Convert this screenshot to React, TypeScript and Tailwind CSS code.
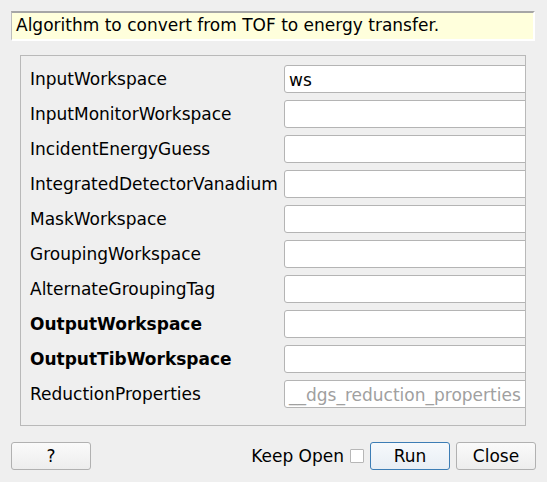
const fields: { name: string; bold?: boolean; value?: string; placeholder?: string }[] = [
  { name: "InputWorkspace", value: "ws" },
  { name: "InputMonitorWorkspace" },
  { name: "IncidentEnergyGuess" },
  { name: "IntegratedDetectorVanadium" },
  { name: "MaskWorkspace" },
  { name: "GroupingWorkspace" },
  { name: "AlternateGroupingTag" },
  { name: "OutputWorkspace", bold: true },
  { name: "OutputTibWorkspace", bold: true },
  { name: "ReductionProperties", placeholder: "__dgs_reduction_properties" },
];

function Field({ name, bold, value, placeholder }: (typeof fields)[number]) {
  return (
    <>
      <div className={`h-[28px] flex items-center pt-[2px] text-[#000] ${bold ? "font-bold" : ""}`}>{name}</div>
      <div className="h-[28px] w-[280px] bg-white border border-[#b4b4b4] rounded-[3px] flex items-center pl-[4px] pt-[2px] leading-none">
        {value ? (
          <span className="text-black">{value}</span>
        ) : placeholder ? (
          <span className="text-[#a0a0a0]">{placeholder}</span>
        ) : null}
      </div>
    </>
  );
}

export default function App() {
  return (
    <div
      className="w-[547px] h-[482px] bg-[#efefef] text-[17px] text-black overflow-hidden flex flex-col"
      style={{ fontFamily: '"DejaVu Sans", sans-serif' }}
    >
      <div className="mt-[11px] ml-[11px] mr-[12px] h-[30px] bg-[#ffffdc] border-t-2 border-l border-t-[#a6a6a6] border-l-[#bdbdbd] border-r-2 border-b-2 border-r-white border-b-white flex items-center pl-[4px]">
        Algorithm to convert from TOF to energy transfer.
      </div>

      <div className="mt-[14px] ml-[20px] mr-[21px] h-[371px] border border-[#b9b9b9] overflow-hidden pt-[9px] pl-[9px]">
        <div className="grid grid-cols-[254px_1fr] gap-y-[7px]">
          {fields.map((f) => (
            <Field key={f.name} {...f} />
          ))}
        </div>
      </div>

      <div className="mt-[16px] px-[11px] flex items-center">
        <button className="w-[80px] h-[28px] rounded-[3px] border border-[#b1b1b1] bg-gradient-to-b from-[#fafafa] to-[#ededed] flex items-center justify-center pt-[2px]">
          ?
        </button>
        <div className="flex-1" />
        <span className="mr-[6px] pt-[2px]">Keep Open</span>
        <div className="w-[14px] h-[14px] bg-white border border-[#b7b7b7] rounded-[1px] mr-[6px]" />
        <button className="w-[80px] h-[28px] rounded-[3px] border border-[#3c7db5] bg-gradient-to-b from-[#f6f9fc] to-[#e8eef4] flex items-center justify-center pt-[2px]">
          Run
        </button>
        <button className="ml-[6px] w-[80px] h-[28px] rounded-[3px] border border-[#b1b1b1] bg-gradient-to-b from-[#fafafa] to-[#ededed] flex items-center justify-center pt-[2px]">
          Close
        </button>
      </div>
    </div>
  );
}
